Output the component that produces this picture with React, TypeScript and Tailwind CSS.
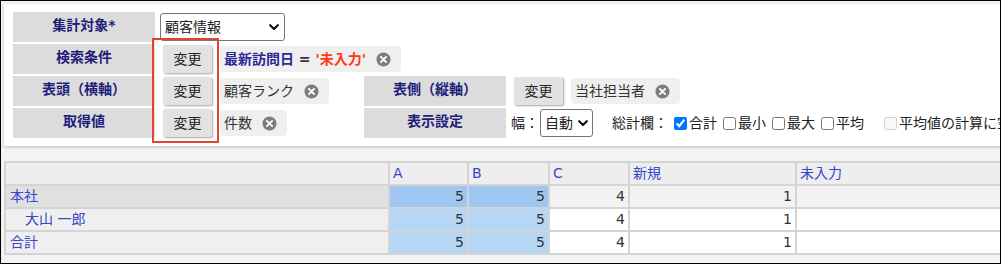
import React from "react";

/* ---------- small drawings ---------- */
function Chevron() {
  return (
    <svg width="10" height="7" viewBox="0 0 10 7" className="shrink-0">
      <path d="M1.2 1.2 L5 5 L8.8 1.2" fill="none" stroke="#111" strokeWidth="2.2" strokeLinecap="round" strokeLinejoin="round" />
    </svg>
  );
}

function RemoveIcon() {
  return (
    <svg width="15" height="15" viewBox="0 0 16 16" className="shrink-0">
      <circle cx="8" cy="8" r="7.5" fill="#7d7d7d" />
      <path d="M5.2 5.2 L10.8 10.8 M10.8 5.2 L5.2 10.8" stroke="#fff" strokeWidth="2" strokeLinecap="round" />
    </svg>
  );
}

/* ---------- pieces ---------- */
function Label({ children }: { children: React.ReactNode }) {
  return (
    <div className="bg-[#dcdcdc] text-center font-bold text-[#1e1e7a] text-[14px] leading-[20px] pt-[3px]">
      {children}
    </div>
  );
}

function ChangeButton() {
  return (
    <button className="ml-[5px] mt-[1px] h-[28px] w-[49px] shrink-0 bg-[#e2e2e2] rounded-[2px] shadow-[1px_1px_2px_rgba(0,0,0,0.35)] text-[14px] leading-[28px] text-[#222]">
      変更
    </button>
  );
}

function Chip({ children }: { children: React.ReactNode }) {
  return (
    <div className="ml-[8px] mt-[2px] h-[26px] bg-[#efefef] rounded-[4px] pl-[4px] pr-[10px] flex items-center gap-[10px] text-[14px] text-[#333] whitespace-nowrap">
      <span>{children}</span>
      <RemoveIcon />
    </div>
  );
}

function Check({ label, checked, disabled }: { label: string; checked?: boolean; disabled?: boolean }) {
  return (
    <label className="flex items-center mr-[6px] whitespace-nowrap">
      <input
        type="checkbox"
        defaultChecked={checked}
        disabled={disabled}
        className="m-0 mr-[2px] w-[13px] h-[13px]"
      />
      <span>{label}</span>
    </label>
  );
}

/* ---------- table data ---------- */
const cols = ["A", "B", "C", "新規", "未入力"];
const rows = [
  { name: "本社", indent: false, values: ["5", "5", "4", "1", ""], group: true },
  { name: "大山 一郎", indent: true, values: ["5", "5", "4", "1", ""], group: false },
  { name: "合計", indent: false, values: ["5", "5", "4", "1", ""], group: false },
];

export default function App() {
  return (
    <div className="relative w-[1001px] h-[264px] border border-black bg-[#f3f3f3] overflow-hidden font-['DejaVu_Sans','Noto_Sans_CJK_JP',sans-serif]">
      {/* ---------- settings panel ---------- */}
      <div className="ml-[3px] mt-[3px] w-[1100px] bg-white shadow-[0_1px_3px_rgba(0,0,0,0.22)] pl-[9px] pt-[8px] pb-[8px]">
        <div className="grid grid-cols-[142px_203px_142px_620px] auto-rows-[30px] gap-x-[3px] gap-y-[2px]">
          {/* row 1 */}
          <Label>集計対象*</Label>
          <div className="col-span-3 flex">
            <div className="ml-[2px] mt-[1px] h-[28px] w-[125px] border border-[#767676] rounded-[3px] bg-white flex items-center justify-between pl-[4px] pr-[5px] text-[14px] text-[#222]">
              <span>顧客情報</span>
              <Chevron />
            </div>
          </div>

          {/* row 2 */}
          <Label>検索条件</Label>
          <div className="col-span-3 flex">
            <ChangeButton />
            <div className="ml-[8px] mt-[2px] h-[26px] bg-[#efefef] rounded-[4px] pl-[4px] pr-[10px] flex items-center gap-[10px] text-[14px] font-bold whitespace-nowrap">
              <span>
                <span className="text-[#2a2a96]">最新訪問日</span>
                <span className="text-[#333]"> = </span>
                <span className="text-[#ff3a1a]">'未入力'</span>
              </span>
              <RemoveIcon />
            </div>
          </div>

          {/* row 3 */}
          <Label>表頭（横軸）</Label>
          <div className="flex">
            <ChangeButton />
            <Chip>顧客ランク</Chip>
          </div>
          <Label>表側（縦軸）</Label>
          <div className="flex">
            <ChangeButton />
            <Chip>当社担当者</Chip>
          </div>

          {/* row 4 */}
          <Label>取得値</Label>
          <div className="flex">
            <ChangeButton />
            <Chip>件数</Chip>
          </div>
          <Label>表示設定</Label>
          <div className="flex items-center text-[14px] text-[#222] whitespace-nowrap">
            <span className="ml-[2px]">幅：</span>
            <div className="ml-[1px] h-[28px] w-[53px] border border-[#767676] rounded-[3px] bg-white flex items-center justify-between pl-[4px] pr-[4px]">
              <span>自動</span>
              <Chevron />
            </div>
            <span className="ml-[19px] mr-[6px]">総計欄：</span>
            <Check label="合計" checked />
            <Check label="最小" />
            <Check label="最大" />
            <Check label="平均" />
            <span className="w-[14px]" />
            <Check label="平均値の計算に空欄を含める" disabled />
          </div>
        </div>
      </div>

      {/* ---------- result table ---------- */}
      <div className="ml-[3px] mt-[15px]">
        <table className="table-fixed border-collapse w-[1250px] text-[14px]">
          <colgroup>
            <col className="w-[384px]" />
            <col className="w-[79px]" />
            <col className="w-[81px]" />
            <col className="w-[80px]" />
            <col className="w-[167px]" />
            <col className="w-[459px]" />
          </colgroup>
          <thead>
            <tr className="h-[23px]">
              <th className="border-2 border-[#d4d4d4] bg-[#eeeeee]" />
              {cols.map((c) => (
                <th key={c} className="border-2 border-[#d4d4d4] bg-[#eeeeee] text-left font-normal text-[#3545cc] pl-[3px] leading-[19px]">
                  {c}
                </th>
              ))}
            </tr>
          </thead>
          <tbody>
            {rows.map((r) => (
              <tr key={r.name} className="h-[23px]">
                <td
                  className={`border-2 border-[#d4d4d4] text-[#3545cc] leading-[19px] ${r.group ? "bg-[#e0e0e0]" : "bg-[#efefef]"} ${r.indent ? "pl-[19px]" : "pl-[4px]"}`}
                >
                  {r.name}
                </td>
                {r.values.map((v, i) => {
                  const blue = i < 2;
                  const bg = blue
                    ? r.group
                      ? "bg-[#9fc6f1]"
                      : "bg-[#b6d6f6]"
                    : r.group
                    ? "bg-[#f2f2f2]"
                    : "bg-white";
                  return (
                    <td key={i} className={`border-2 border-[#d4d4d4] ${bg} text-right pr-[3px] text-[#333] leading-[19px]`}>
                      {v}
                    </td>
                  );
                })}
              </tr>
            ))}
          </tbody>
        </table>
      </div>

      {/* ---------- annotation ---------- */}
      <div className="absolute left-[151px] top-[37px] w-[67px] h-[105px] border-2 border-[#e0462f]" />
    </div>
  );
}
